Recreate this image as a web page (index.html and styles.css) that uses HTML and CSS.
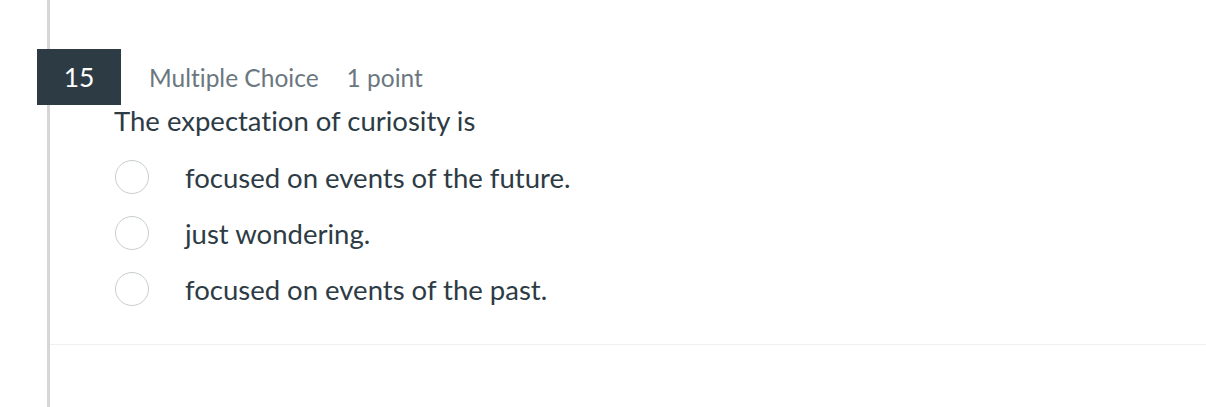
FILE: index.html
```html
<!DOCTYPE html>
<html>
<head>
<meta charset="utf-8">
<link rel="stylesheet" href="styles.css">
</head>
<body>
<div class="page">
  <div class="question">
    <div class="header">
      <div class="qnum">15</div>
      <div class="meta">Multiple Choice</div>
      <div class="meta points">1 point</div>
    </div>
    <div class="qtext">The expectation of curiosity is</div>
    <div class="options">
      <div class="option"><span class="radio"></span><span class="label">focused on events of the future.</span></div>
      <div class="option"><span class="radio"></span><span class="label">just wondering.</span></div>
      <div class="option"><span class="radio"></span><span class="label">focused on events of the past.</span></div>
    </div>
  </div>
</div>
</body>
</html>
```
FILE: styles.css
```css
html, body {
  margin: 0;
  padding: 0;
  background: #fff;
  font-family: Lato, "Noto Sans", sans-serif;
  font-variant-ligatures: none;
}
.page {
  margin-left: 47px;
  border-left: 3px solid #d6d6d6;
  height: 407px;
  box-sizing: border-box;
}
.question {
  padding-top: 49px;
  height: 345px;
  box-sizing: border-box;
  border-bottom: 1px solid #efefef;
}
.header {
  display: flex;
  align-items: center;
  height: 56px;
  margin-left: -13px;
}
.qnum {
  width: 84px;
  height: 56px;
  background: #2d3b45;
  color: #fff;
  font-size: 26.5px;
  display: flex;
  align-items: center;
  justify-content: center;
}
.meta {
  color: #6b7780;
  font-size: 24.5px;
  margin-left: 28px;
}
.meta.points {
  margin-left: 28px;
}
.qtext {
  color: #2d3b45;
  font-size: 27.5px;
  line-height: 31px;
  padding-left: 64px;
}
.options {
  padding-left: 65px;
  padding-top: 13px;
}
.option {
  display: flex;
  align-items: center;
  height: 56px;
}
.radio {
  width: 34px;
  height: 34px;
  border: 1px solid #c7cdd1;
  border-radius: 50%;
  box-sizing: border-box;
  flex: none;
}
.label {
  color: #2d3b45;
  font-size: 27.5px;
  margin-left: 36px;
}
```
